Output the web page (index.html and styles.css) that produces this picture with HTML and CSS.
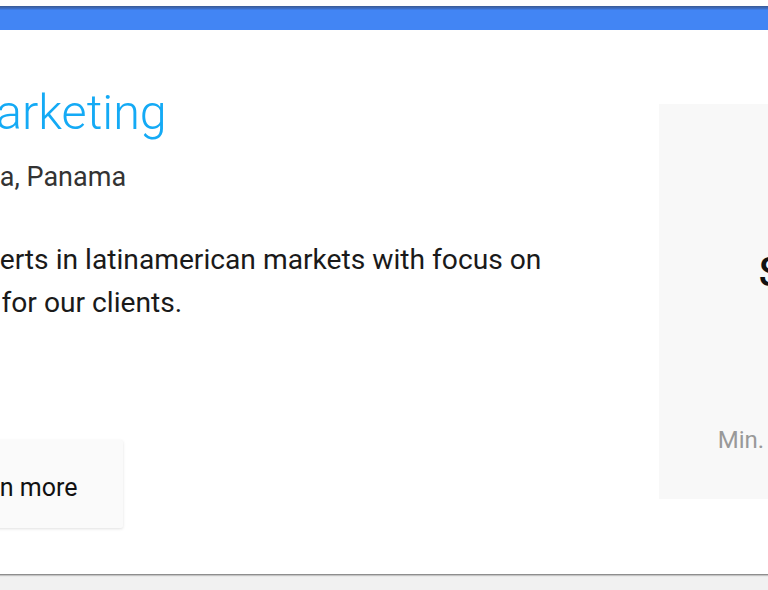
FILE: index.html
```html
<!DOCTYPE html>
<html lang="en">
<head>
<meta charset="utf-8">
<title>e-Marketing</title>
<link rel="stylesheet" href="styles.css">
</head>
<body>
<div class="top-gap"></div>
<header class="bar"></header>
<main class="card">
  <section class="info">
    <h1 class="title">e-Marketing</h1>
    <p class="place">Panama, Panama</p>
    <p class="desc">As experts in latinamerican markets with focus on trends for our clients.</p>
    <button class="more">Learn more</button>
  </section>
  <aside class="price">
    <div class="amount">$9</div>
    <div class="min">Min. budget</div>
  </aside>
</main>
<div class="below"></div>
</body>
</html>
```
FILE: styles.css
```css
html, body {
  margin: 0;
  padding: 0;
}
body {
  width: 768px;
  height: 590px;
  overflow: hidden;
  background: #f1f1f1;
  font-family: Roboto, "Liberation Sans", sans-serif;
}
.top-gap {
  height: 6px;
  background: #ffffff;
}
.bar {
  height: 24px;
  background: linear-gradient(to bottom, #3a5a94 0, #3e72cf 3px, #4285f4 4px, #4285f4 100%);
}
.card {
  height: 544px;
  box-sizing: border-box;
  background: #ffffff;
  display: flex;
  align-items: flex-start;
  padding-top: 55px;
  overflow: hidden;
  box-shadow: 0 1px 0 #8e8e8e, 0 2px 1px #c4c4c4;
  position: relative;
}
.info {
  flex: none;
  width: 690px;
  margin-left: -85px;
  display: flex;
  flex-direction: column;
  align-items: flex-start;
}
.title {
  margin: 0;
  font-weight: 300;
  font-size: 48.5px;
  line-height: 56px;
  color: #14aaf5;
}
.place {
  margin: 20px 0 0;
  font-size: 27px;
  line-height: 32px;
  color: #333333;
}
.desc {
  margin: 45px 0 0;
  font-size: 28.2px;
  line-height: 43px;
  color: #1a1a1a;
}
.more {
  margin-top: 116px;
  border: 0;
  background: #fafafa;
  box-shadow: 0 1px 3px rgba(0, 0, 0, 0.12);
  font-family: Roboto, "Liberation Sans", sans-serif;
  font-size: 25px;
  line-height: 28px;
  color: #111111;
  padding: 34px 46px 26px 36px;
  border-radius: 2px;
}
.price {
  flex: none;
  margin-left: 54px;
  margin-top: 19px;
  width: 244px;
  height: 395px;
  background: #f8f8f8;
  display: flex;
  flex-direction: column;
  align-items: center;
}
.amount {
  margin-top: 145px;
  font-size: 40px;
  font-weight: 500;
  line-height: 48px;
  color: #111111;
}
.min {
  margin-top: 129px;
  font-size: 24px;
  line-height: 28px;
  color: #999999;
}
.below {
  height: 16px;
}
```
